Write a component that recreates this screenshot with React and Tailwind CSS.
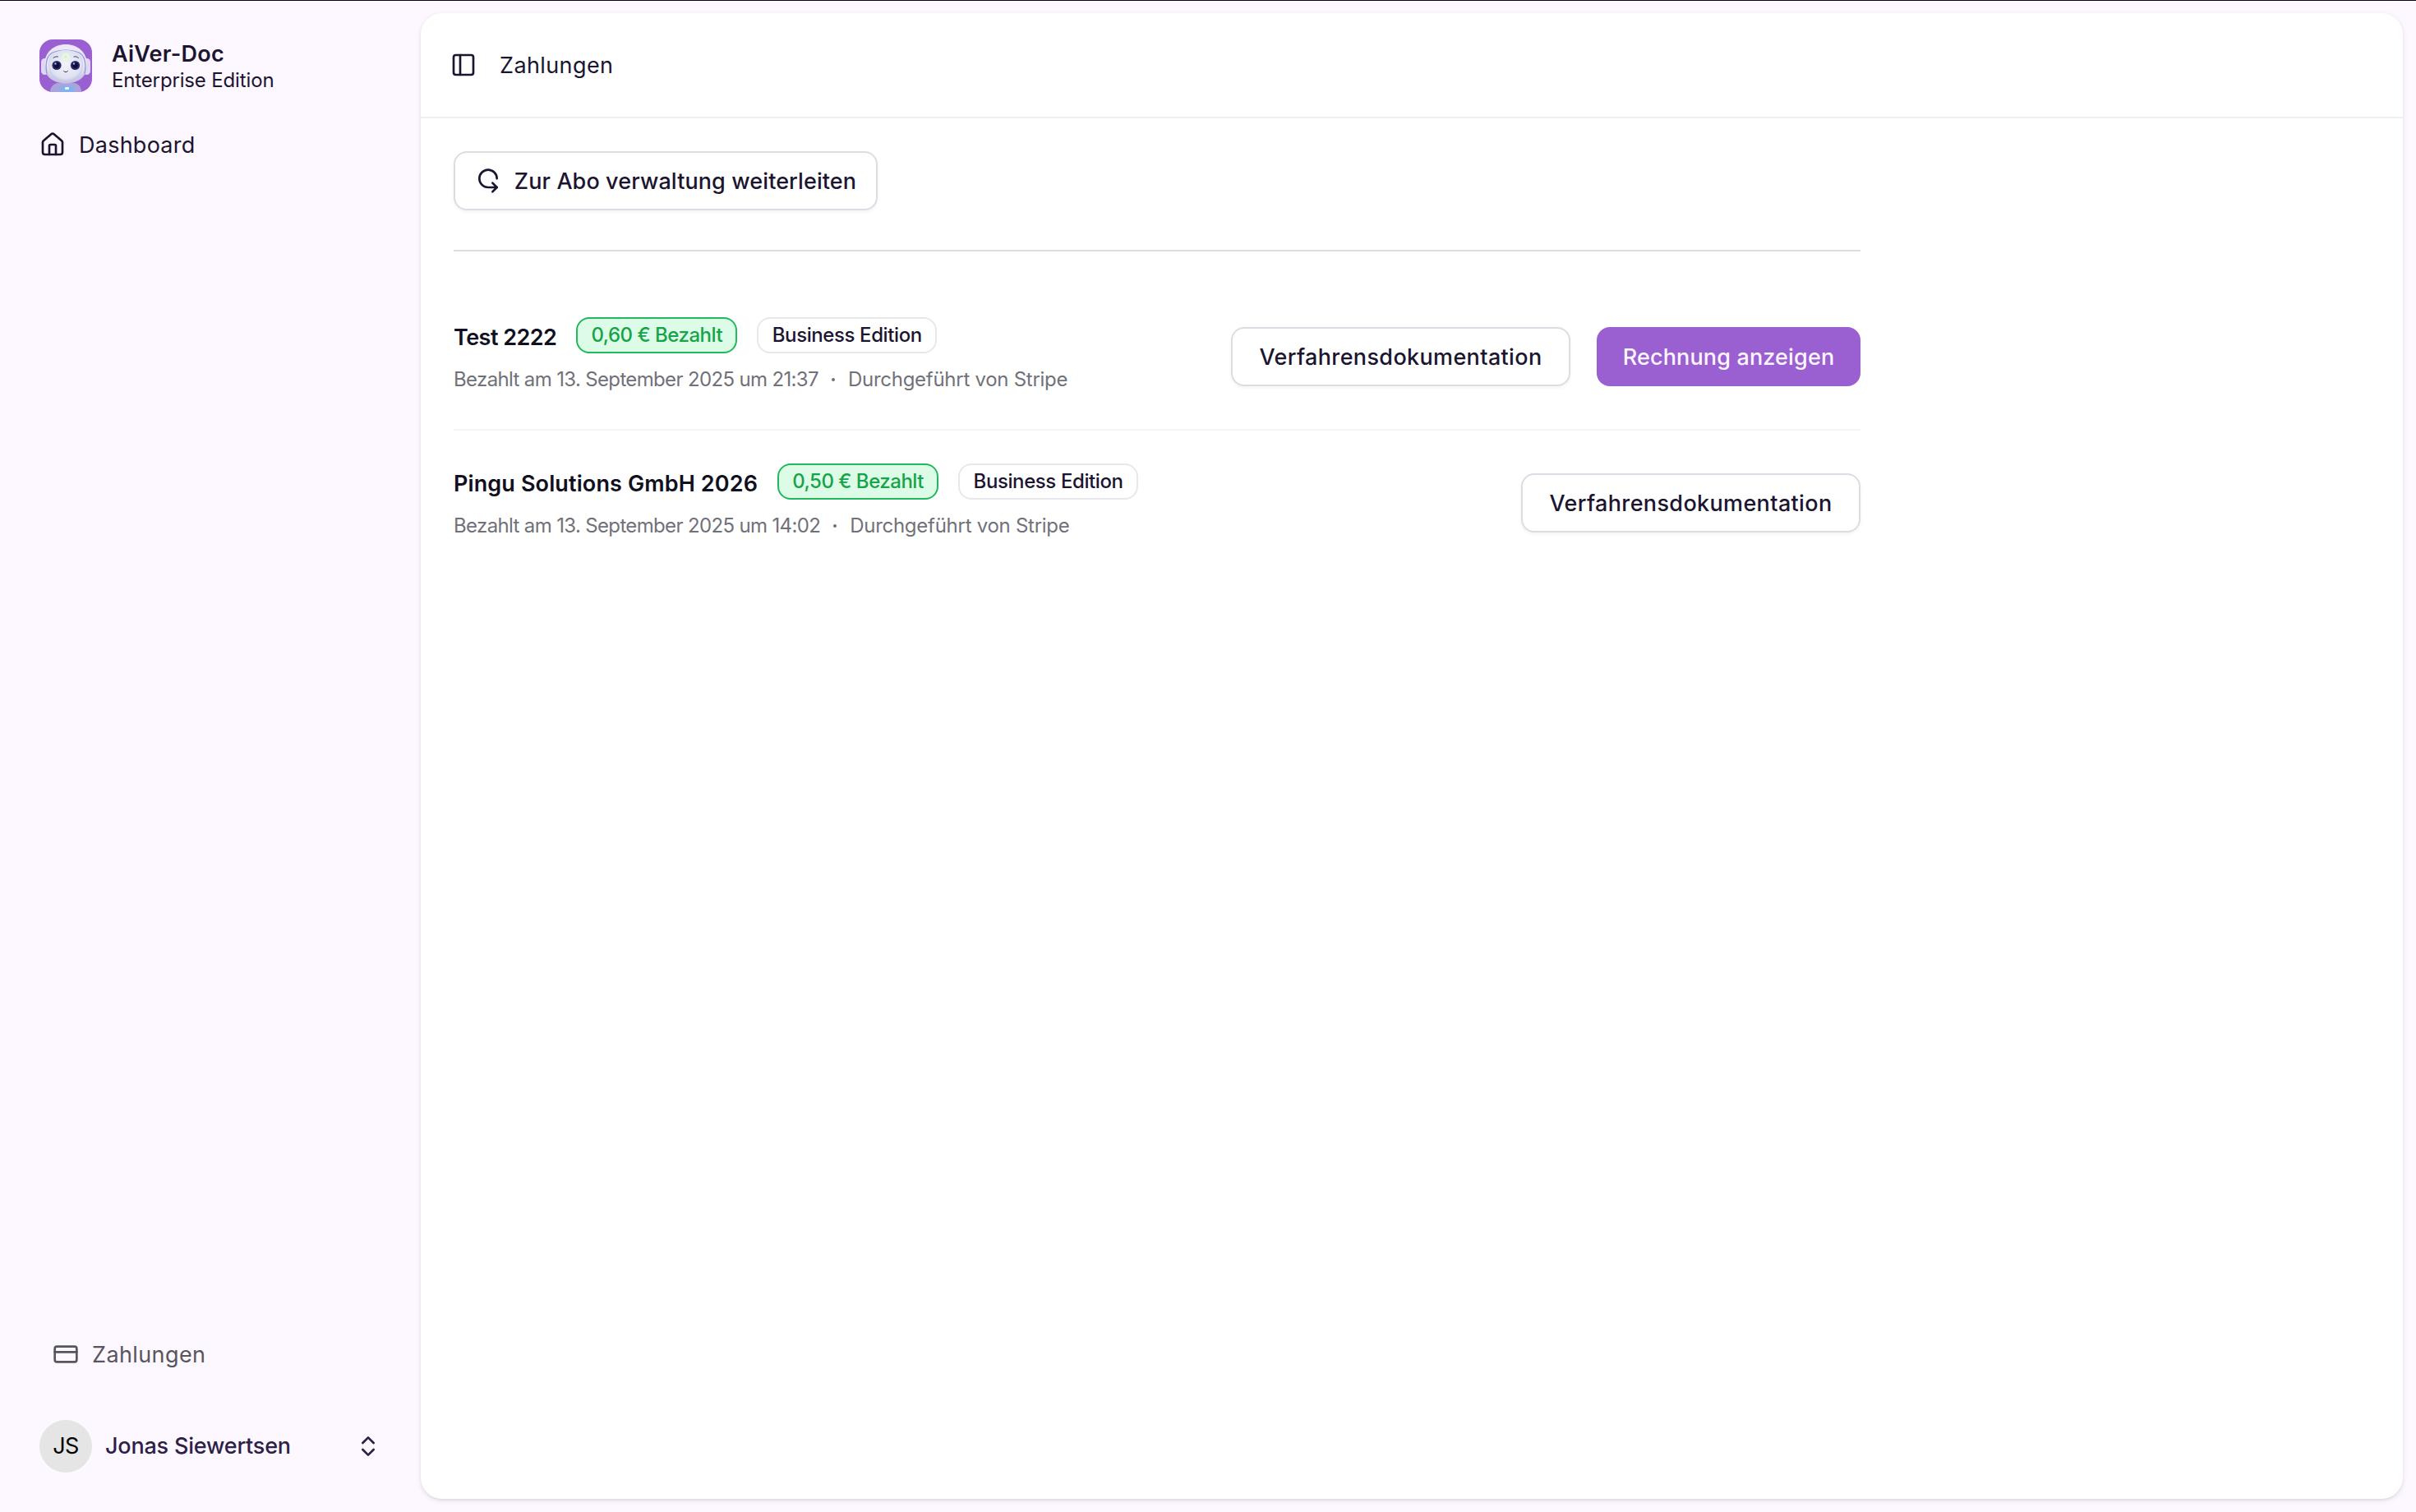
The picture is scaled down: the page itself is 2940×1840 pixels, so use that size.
import React from 'react';
import { ChevronsUpDown, CreditCard, House, IterationCcw, PanelLeft } from 'lucide-react';

const payments = [
  {
    id: 1,
    name: 'Test 2222',
    nameTracking: 'tracking-[-0.54px]',
    amount: '0,60 €',
    edition: 'Business Edition',
    paidAt: '13. September 2025 um 21:37',
    hasInvoice: true,
  },
  {
    id: 2,
    name: 'Pingu Solutions GmbH 2026',
    nameTracking: 'tracking-[0.12px]',
    amount: '0,50 €',
    edition: 'Business Edition',
    paidAt: '13. September 2025 um 14:02',
    hasInvoice: false,
  },
];

const RobotLogo = () => (
  <svg viewBox="0 0 64 64" className="w-16 h-16 rounded-2xl shrink-0">
    <defs>
      <radialGradient id="helmet" cx="50%" cy="35%" r="65%">
        <stop offset="0%" stopColor="#f6f4fc" />
        <stop offset="75%" stopColor="#e6e2f4" />
        <stop offset="100%" stopColor="#c3bce3" />
      </radialGradient>
      <radialGradient id="face" cx="50%" cy="45%" r="60%">
        <stop offset="0%" stopColor="#f2f3fa" />
        <stop offset="75%" stopColor="#dfe1f0" />
        <stop offset="100%" stopColor="#b4b8dc" />
      </radialGradient>
    </defs>
    <rect width="64" height="64" fill="#9a5fd0" />
    {/* body */}
    <path d="M13 64c0-6 4-10 9-11h20c6 1 9 5 9 11z" fill="#a9a5dc" />
    <rect x="25" y="57" width="17" height="8" rx="2" fill="#7fb2ee" />
    <rect x="31" y="58" width="5" height="3" rx="1" fill="#e9f6ff" />
    {/* ears */}
    <rect x="2" y="23" width="9" height="20" rx="4.5" fill="#e0d8f2" />
    <rect x="53" y="23" width="9" height="20" rx="4.5" fill="#e0d8f2" />
    {/* head */}
    <path d="M32 6C47 6 58 16 58 31c0 14-10 22.500-26 22.500S6 45 6 31C6 16 17 6 32 6z" fill="url(#helmet)" />
    <path d="M9 42c-2-12-1-22 7-26 9-4 23-4 32 0 8 4 9 14 7 26" fill="none" stroke="#8f97d8" strokeWidth="1.200" />
    <path d="M32 13c14 0 21 6 21 18 0 13-8 20-21 20s-21-7-21-20c0-12 7-18 21-18z" fill="url(#face)" />
    <circle cx="32" cy="21" r="4.500" fill="#e9f7e2" />
    <circle cx="32" cy="21" r="1.500" fill="#cdefc4" />
    {/* eyes */}
    <circle cx="21" cy="31.500" r="5.600" fill="#262a66" />
    <circle cx="21" cy="31.500" r="3.400" fill="#0d0f38" />
    <circle cx="19.500" cy="29.500" r="1.200" fill="#9fb0ee" />
    <circle cx="43.500" cy="31.500" r="5.600" fill="#262a66" />
    <circle cx="43.500" cy="31.500" r="3.400" fill="#0d0f38" />
    <circle cx="42" cy="29.500" r="1.200" fill="#9fb0ee" />
    <g fill="none" stroke="#35356b" strokeWidth="1" strokeLinecap="round">
      <path d="M17 22.500c1.500-1.500 3.500-2 5.500-1.500" />
      <path d="M42 21c2-.5 4 0 5.500 1.500" />
      <path d="M29.500 38.500c1.300 1.600 3.700 1.600 5 0" />
    </g>
  </svg>
);

const OutlineButton = ({ icon, children, className = '' }) => (
  <button
    className={`h-[72px] flex items-center justify-center gap-4 border-2 border-[#dcdce5] rounded-2xl bg-white font-medium whitespace-nowrap shadow-[0_2px_4px_rgba(0,0,0,0.05)] ${className}`}
  >
    {icon}
    <span className="pt-0.5">{children}</span>
  </button>
);

const Sidebar = () => (
  <aside className="w-[512px] shrink-0 flex flex-col justify-between p-8">
    <div>
      <div className="flex gap-6 px-4 pt-4">
        <RobotLogo />
        <div className="pt-px whitespace-nowrap">
          <div className="h-[34px] leading-[34px] font-semibold tracking-[0.24px]">AiVer-Doc</div>
          <div className="h-[30px] leading-[30px] text-[24px] tracking-[-0.15px]">Enterprise Edition</div>
        </div>
      </div>
      <a className="mt-[31px] h-16 px-4 flex items-center gap-4 tracking-[0.25px]">
        <House size={32} />
        <span className="pt-0.5">Dashboard</span>
      </a>
    </div>

    <div>
      <a className="h-16 px-8 flex items-center gap-4 text-[#58555c] tracking-[0.4px]">
        <CreditCard size={32} />
        <span className="pt-0.5">Zahlungen</span>
      </a>
      <button className="mt-8 h-24 w-full px-4 flex items-center gap-4 text-[#2d1f47]">
        <span className="size-16 pt-px rounded-full bg-[#e5e5e5] text-black flex items-center justify-center tracking-[-0.6px]">
          JS
        </span>
        <span className="pt-px font-medium tracking-[-0.2px]">Jonas Siewertsen</span>
        <ChevronsUpDown size={32} className="ml-auto" />
      </button>
    </div>
  </aside>
);

const PaymentRow = ({ payment }) => (
  <div className="h-[178px] flex items-center justify-between border-b-2 border-[#f5f5f7] last:border-transparent">
    <div className="h-24 flex flex-col justify-between whitespace-nowrap">
      <div className="flex items-start gap-6">
        <h2 className={`h-12 leading-[50px] font-semibold text-[#101020] ${payment.nameTracking}`}>{payment.name}</h2>
        <span className="w-[196px] h-11 flex items-center justify-center border-2 border-[#22b95c] rounded-2xl bg-[#dcfce7] text-[24px] font-medium text-[#16a34a] tracking-[-0.49px]">
          {payment.amount} Bezahlt
        </span>
        <span className="w-[219px] h-11 flex items-center justify-center border-2 border-[#e8e8eb] rounded-2xl text-[24px] font-medium tracking-[-0.4px]">
          {payment.edition}
        </span>
      </div>
      <div className="flex items-center h-10 text-[24px] text-[#71717a] tracking-[-0.65px]">
        <span>Bezahlt am {payment.paidAt}</span>
        <span className="size-1 mx-4 rounded-full bg-[#71717a]" />
        <span className="tracking-[-0.27px]">Durchgeführt von Stripe</span>
      </div>
    </div>
    <div className="flex gap-8">
      <OutlineButton className="w-[413px] tracking-[0.35px]">Verfahrensdokumentation</OutlineButton>
      {payment.hasInvoice && (
        <button className="w-[321px] h-[72px] pt-0.5 rounded-2xl bg-[#9a5fd0] text-[#fdf6ff] font-medium tracking-[0.15px]">
          Rechnung anzeigen
        </button>
      )}
    </div>
  </div>
);

export default function App() {
  return (
    <div className="h-[1840px] flex flex-col bg-[#fdf7ff] font-[Inter,sans-serif] text-[27px] text-[#1c1530]">
      <div className="h-px shrink-0 bg-[#12001a]" />
      <div className="-mt-px flex flex-1 min-h-0">
        <Sidebar />
        <main className="flex-1 my-4 mr-4 bg-white rounded-[26px] shadow-[0_2px_6px_rgba(0,0,0,0.1),0_2px_4px_-2px_rgba(0,0,0,0.1)]">
          <header className="h-32 px-9 flex items-center gap-7 border-b-2 border-[#efeff1] tracking-[0.4px]">
            <PanelLeft size={32} />
            <h1 className="pt-0.5">Zahlungen</h1>
          </header>
          <div className="w-[1712px] mx-10 pt-10">
            <OutlineButton className="w-[516px] tracking-[0.1px]" icon={<IterationCcw size={32} />}>
              Zur Abo verwaltung weiterleiten
            </OutlineButton>
            <div className="mt-12 mb-10 h-0.5 bg-[#dcdce2]" />
            {payments.map((payment) => (
              <PaymentRow key={payment.id} payment={payment} />
            ))}
          </div>
        </main>
      </div>
    </div>
  );
}
